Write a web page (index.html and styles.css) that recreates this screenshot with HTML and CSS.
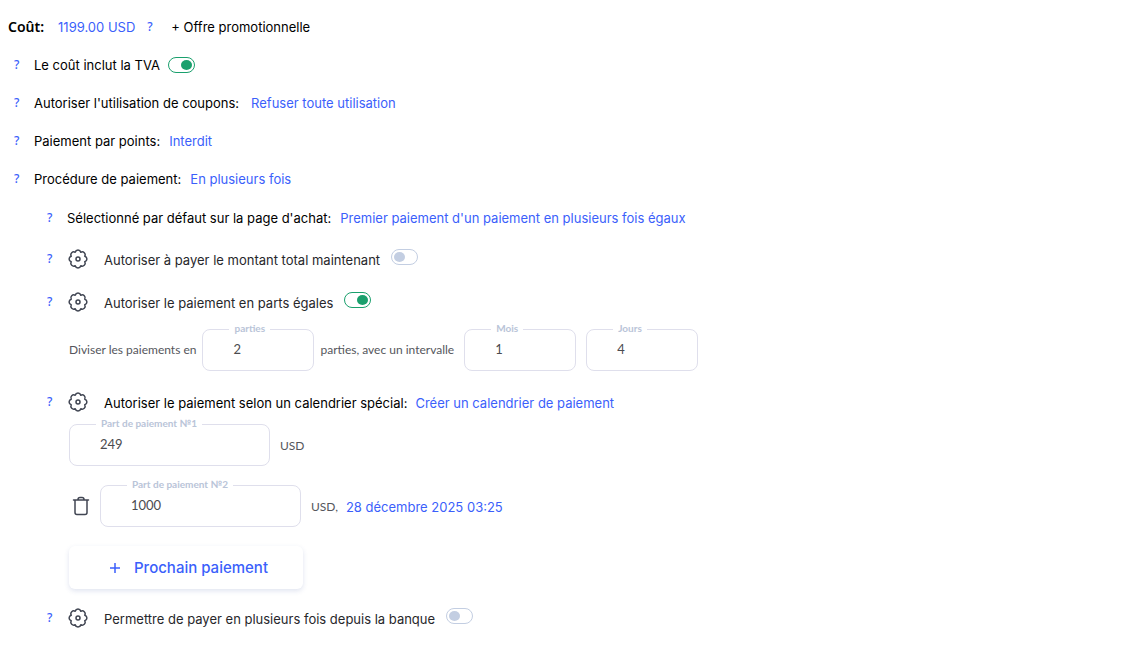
FILE: index.html
```html
<!DOCTYPE html>
<html lang="fr">

<head>
    <meta charset="UTF-8">
    <meta name="viewport" content="width=device-width, initial-scale=1">
    <title>Coût</title>
    <link rel="stylesheet" href="styles.css">
</head>

<body>
    <!-- shared icons -->
    <svg class="sprite" aria-hidden="true">
        <symbol id="gear" viewBox="0 0 20 20">
            <path d="M7.200 3.250A2.900 2.900 0 0 1 12.800 3.250A2.900 2.900 0 0 1 16.750 7.200A2.900 2.900 0 0 1 16.750 12.800A2.900 2.900 0 0 1 12.800 16.750A2.900 2.900 0 0 1 7.200 16.750A2.900 2.900 0 0 1 3.250 12.800A2.900 2.900 0 0 1 3.250 7.200A2.900 2.900 0 0 1 7.200 3.250z"/>
            <circle cx="10" cy="10" r="2"/>
        </symbol>
        <symbol id="trash" viewBox="0 0 18 20">
            <path d="M1.500 4h15M3 4v12.500A2 2 0 0 0 5 18.500h8a2 2 0 0 0 2-2V4M6 4V3.500A2 2 0 0 1 8 1.500h2a2 2 0 0 1 2 2V4"/>
        </symbol>
    </svg>

    <main class="price">
        <div class="row row-cost">
            <strong class="title">Coût:</strong>
            <a href="#" class="link">1199.00 USD</a>
            <a href="#" class="help">?</a>
            <a href="#" class="promo">+ Offre promotionnelle</a>
        </div>
        <div class="row">
            <a href="#" class="help">?</a>
            <label for="vat">Le coût inclut la TVA</label>
            <input type="checkbox" class="switch" id="vat" checked>
        </div>
        <div class="row">
            <a href="#" class="help">?</a>
            <span>Autoriser l'utilisation de coupons:</span>
            <a href="#" class="link link-far">Refuser toute utilisation</a>
        </div>
        <div class="row">
            <a href="#" class="help">?</a>
            <span>Paiement par points:</span>
            <a href="#" class="link">Interdit</a>
        </div>
        <div class="row">
            <a href="#" class="help">?</a>
            <span>Procédure de paiement:</span>
            <a href="#" class="link">En plusieurs fois</a>
        </div>

        <section class="steps">
            <div class="row">
                <a href="#" class="help">?</a>
                <span>Sélectionné par défaut sur la page d'achat:</span>
                <a href="#" class="link">Premier paiement d'un paiement en plusieurs fois égaux</a>
            </div>

            <div class="row option">
                <a href="#" class="help">?</a>
                <button type="button" class="icon-btn" aria-label="Paramètres"><svg class="gear"><use href="#gear"/></svg></button>
                <label class="dim" for="full">Autoriser à payer le montant total maintenant</label>
                <input type="checkbox" class="switch" id="full">
            </div>

            <div class="row option">
                <a href="#" class="help">?</a>
                <button type="button" class="icon-btn" aria-label="Paramètres"><svg class="gear"><use href="#gear"/></svg></button>
                <label class="dim" for="equal">Autoriser le paiement en parts égales</label>
                <input type="checkbox" class="switch" id="equal" checked>
            </div>
            <div class="fields split">
                <span>Diviser les paiements en</span>
                <div class="field small">
                    <input type="text" id="parts" value="2">
                    <label for="parts">parties</label>
                </div>
                <span>parties, avec un intervalle</span>
                <div class="interval">
                    <div class="field small">
                        <input type="text" id="months" value="1">
                        <label for="months">Mois</label>
                    </div>
                    <div class="field small">
                        <input type="text" id="days" value="4">
                        <label for="days">Jours</label>
                    </div>
                </div>
            </div>

            <div class="row option">
                <a href="#" class="help">?</a>
                <button type="button" class="icon-btn" aria-label="Paramètres"><svg class="gear"><use href="#gear"/></svg></button>
                <span class="name">Autoriser le paiement selon un calendrier spécial:</span>
                <a href="#" class="link">Créer un calendrier de paiement</a>
            </div>
            <div class="schedule">
                <div class="fields">
                    <div class="field">
                        <input type="text" id="part1" value="249">
                        <label for="part1">Part de paiement №1</label>
                    </div>
                    <span>USD</span>
                </div>
                <div class="fields">
                    <button type="button" class="icon-btn" aria-label="Supprimer"><svg class="trash"><use href="#trash"/></svg></button>
                    <div class="field">
                        <input type="text" id="part2" value="1000">
                        <label for="part2">Part de paiement №2</label>
                    </div>
                    <span>USD,</span>
                    <a href="#" class="link">28 décembre 2025 03:25</a>
                </div>
                <button type="button" class="add">
                    <svg viewBox="0 0 12 12"><path d="M6 1v10M1 6h10"/></svg>
                    Prochain paiement
                </button>
            </div>

            <div class="row option">
                <a href="#" class="help">?</a>
                <button type="button" class="icon-btn" aria-label="Paramètres"><svg class="gear"><use href="#gear"/></svg></button>
                <label class="dim" for="bank">Permettre de payer en plusieurs fois depuis la banque</label>
                <input type="checkbox" class="switch" id="bank">
            </div>
        </section>
    </main>
</body>

</html>
```
FILE: styles.css
```css
* {
    box-sizing: border-box;
}

body {
    margin: 0;
    background: #fff;
    color: #000;
    font-family: Inter, sans-serif;
    font-size: 13px;
    line-height: 20px;
}

a {
    text-decoration: none;
}

.sprite {
    display: none;
}

.price {
    padding: 8px;
}

.row {
    display: flex;
    align-items: center;
    min-height: 38px;
}

.link {
    margin-left: 9px;
    color: #3b5ffb;
}

.link-far {
    margin-left: 12px;
}

.help {
    width: 26px;
    padding-left: 6px;
    color: #3b5ffb;
    font-family: "Noto Sans", sans-serif;
    font-size: 12px;
    font-weight: 500;
}

.title {
    font-family: "Noto Sans", sans-serif;
    font-size: 14px;
    font-weight: 600;
}

.row-cost .link {
    margin-left: 14px;
}

.row-cost .help {
    width: 36px;
    padding-left: 12px;
}

.promo {
    color: #000;
}

/* switches */
.switch {
    appearance: none;
    width: 27px;
    height: 16px;
    margin: 0 0 0 8px;
    padding: 2px;
    border: 1px solid #c3cee2;
    border-radius: 8px;
    background: #fff;
}

.switch::before {
    content: "";
    display: block;
    width: 11px;
    height: 10px;
    border-radius: 50%;
    background: #c3cee2;
}

.switch:checked {
    border-color: #1aa06d;
}

.switch:checked::before {
    margin-left: auto;
    background: #1aa06d;
}

/* payment options */
.steps {
    padding: 1px 0 0 33px;
}

.option {
    min-height: 43px;
}

.option .icon-btn {
    margin-left: 1px;
}

.option .dim,
.option .name {
    margin-left: 16px;
    padding-top: 2px;
}

.option .link {
    margin-left: 8px;
    padding-top: 2px;
}

.option .switch {
    margin: 0 0 4px 11px;
}

.dim {
    color: #27272b;
}

.icon-btn {
    display: flex;
    padding: 0;
    border: 0;
    background: none;
}

.icon-btn svg {
    height: 20px;
    fill: none;
    stroke: #414653;
    stroke-width: 1.5;
    stroke-linecap: round;
    stroke-linejoin: round;
}

.gear {
    width: 20px;
}

.trash {
    width: 18px;
}

.fields {
    display: flex;
    align-items: center;
    gap: 10px;
    color: #55565c;
    font-family: Lato, sans-serif;
    font-size: 12px;
}

.split {
    gap: 6px;
    margin: 6px 0 9px;
    padding-left: 28px;
}

.interval {
    display: flex;
    gap: 10px;
    margin-left: 4px;
}

.field {
    position: relative;
    width: 201px;
}

.small {
    width: 112px;
}

.field input {
    display: block;
    width: 100%;
    height: 42px;
    padding: 0 30px 2px;
    border: 1px solid #dfdfec;
    border-radius: 8px;
    background: #fff;
    color: #4b4b4f;
    font-family: Lato, sans-serif;
    font-size: 13px;
}

/* label sits in the top border */
.field label {
    position: absolute;
    top: -8px;
    left: 27px;
    padding: 0 5px;
    background: #fff;
    color: #b9c4d8;
    font-size: 10px;
    font-weight: 700;
    line-height: 14px;
    white-space: nowrap;
}

.schedule {
    display: flex;
    flex-direction: column;
    align-items: flex-start;
    gap: 19px;
    margin: 1px 0 7px;
    padding-left: 28px;
}

.schedule .icon-btn {
    margin-left: 3px;
}

.schedule span,
.schedule .link {
    padding-top: 2px;
}

.schedule .link {
    margin-left: -2px;
    font-family: Inter, sans-serif;
    font-size: 13px;
}

.add {
    display: flex;
    align-items: center;
    gap: 13px;
    height: 43px;
    padding: 0 35px 0 40px;
    border: 0;
    border-radius: 6px;
    background: #fff;
    box-shadow: 0 2px 5px rgba(60, 90, 160, 0.16);
    color: #3b5ffb;
    font-family: Inter, sans-serif;
    font-size: 15px;
    font-weight: 500;
}

.add svg {
    width: 12px;
    height: 12px;
    fill: none;
    stroke: #3b5ffb;
    stroke-width: 1.5;
}
```
